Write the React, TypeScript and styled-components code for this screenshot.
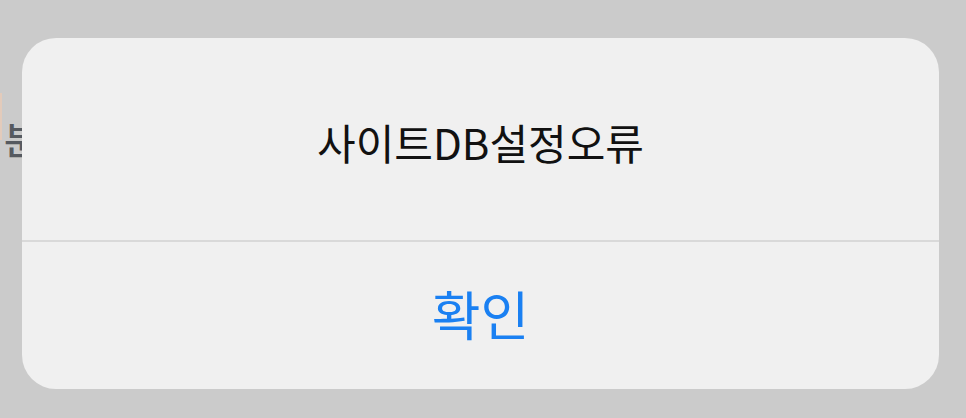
import styled, { createGlobalStyle } from "styled-components";

const GlobalStyle = createGlobalStyle`
  html, body {
    margin: 0;
    padding: 0;
    background: #cbcbcb;
    font-family: "Noto Sans CJK KR", "Noto Sans", sans-serif;
  }
`;

const Screen = styled.div`
  position: relative;
  width: 966px;
  height: 418px;
  overflow: hidden;
  background: #cbcbcb;
`;

const PageBehind = styled.div`
  display: flex;
  align-items: flex-start;
  padding: 93px 0 0 0;
  gap: 2px;
`;

const AccentStrip = styled.div`
  width: 2px;
  height: 47px;
  background: #e3cbbb;
`;

const BehindText = styled.span`
  margin-top: 26px;
  font-size: 38px;
  line-height: 1;
  color: #565a60;
  font-weight: 500;
`;

const Dialog = styled.div`
  position: absolute;
  left: 22px;
  top: 38px;
  width: 917px;
  height: 351px;
  border-radius: 34px;
  background: #f0f0f0;
  display: flex;
  flex-direction: column;
  overflow: hidden;
`;

const Message = styled.div`
  height: 202px;
  display: flex;
  align-items: center;
  justify-content: center;
  padding-top: 4px;
  box-sizing: border-box;
  font-size: 42px;
  color: #111;
  letter-spacing: 0;
`;

const Divider = styled.div`
  height: 2px;
  background: #d9d9d9;
`;

const ActionButton = styled.button`
  flex: 1;
  border: none;
  background: transparent;
  font-family: inherit;
  font-size: 53px;
  color: #1a80f2;
  display: flex;
  align-items: center;
  justify-content: center;
  padding: 0 0 6px;
  cursor: pointer;
`;

export default function App() {
  return (
    <>
      <GlobalStyle />
      <Screen>
        <PageBehind>
          <AccentStrip />
          <BehindText>분</BehindText>
        </PageBehind>
        <Dialog>
          <Message>사이트DB설정오류</Message>
          <Divider />
          <ActionButton>확인</ActionButton>
        </Dialog>
      </Screen>
    </>
  );
}
